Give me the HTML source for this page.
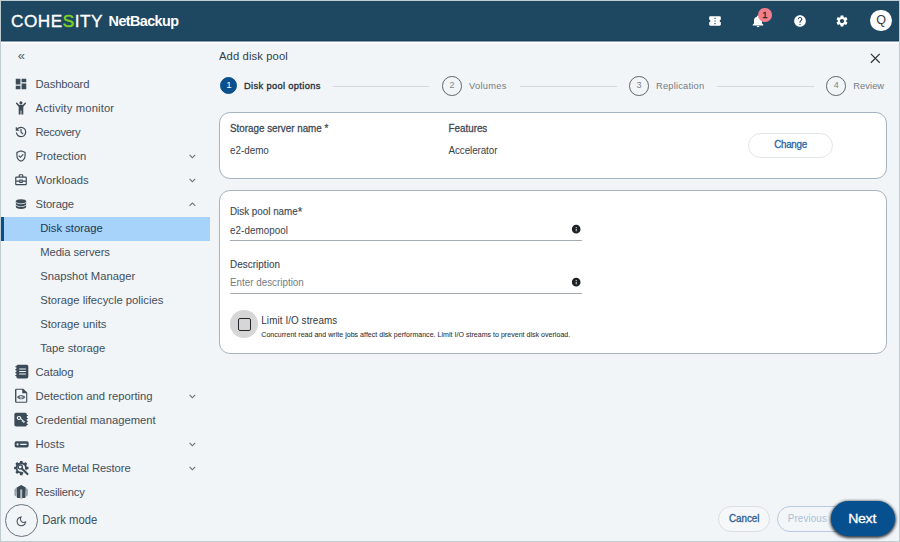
<!DOCTYPE html>
<html lang="en">
<head>
<meta charset="utf-8">
<title>Add disk pool - NetBackup</title>
<style>
*{box-sizing:border-box;margin:0;padding:0}
html,body{width:900px;height:542px;overflow:hidden}
body{background:#bfccd2;font-family:"Liberation Sans",sans-serif;color:#3e4b57;position:relative;font-size:11.25px}
#app{position:absolute;left:1px;top:1px;width:897.9px;height:539.6px;background:#f2f5f7;overflow:hidden}
.abs{position:absolute;white-space:nowrap}
/* header */
#hdr{position:absolute;left:0;top:0;width:898px;height:40px;background:#1e4861;border-bottom:1px solid #173e59}
#hdrline{position:absolute;left:0;top:40px;width:898px;height:3px;background:linear-gradient(#8fa4b1 0,#8fa4b1 1px,#fff 1px,#fff 2px,#f8fafb 2px,#f8fafb 3px)}
#logo{left:10px;top:7.6px;height:24px;line-height:24px;font-size:17.2px;color:#fff;letter-spacing:0.5px;-webkit-text-stroke:0.35px #fff}
#logo .g{color:#7ed321;-webkit-text-stroke:0.5px #7ed321}
#nb{left:107.6px;top:7.6px;height:24px;line-height:24px;font-size:14.4px;font-weight:bold;color:#fff;letter-spacing:-0.6px}
.hic{position:absolute;fill:#fff}
#badge{position:absolute;left:757.3px;top:7.3px;width:13.4px;height:13.4px;border-radius:50%;background:#f07f8b;color:#2a2a2a;font-size:9.5px;line-height:13.4px;text-align:center;-webkit-text-stroke:0.3px #2a2a2a}
#avatar{position:absolute;left:869.3px;top:9px;width:21.4px;height:21.4px;border-radius:50%;background:#fff;color:#3a3a3a;font-size:12.5px;line-height:21.4px;text-align:center}
/* sidebar */
.nav{position:absolute;left:0;width:209px;height:24px}
.nav svg.ic{position:absolute;left:13.3px;top:5px;width:14px;height:14px;fill:#3c4b58}
.nav .t{position:absolute;left:34.6px;top:0;height:24px;line-height:24px;font-size:11.25px;color:#424f5c;white-space:nowrap;transform:scaleY(1.03);transform-origin:0 66%}
.nav.sub .t{left:39.2px}
.nav svg.ch{position:absolute;left:184.5px;top:5.8px;width:12.8px;height:12.8px;fill:#63707b}
.nav.sel:after{content:"";position:absolute;left:0.2px;top:0.9px;width:208.6px;height:23.7px;background:#a7d3fb;z-index:0}
.nav.sel:before{content:"";position:absolute;left:0.2px;top:0.9px;width:2.4px;height:23.7px;background:#0b4f8a;z-index:1}
.nav.sel .t{z-index:2}
.nav.sel .t{color:#1d3850}
/* main */
.card{position:absolute;left:218px;width:667.6px;background:#fff;border:1.6px solid #a6b3c0;border-radius:11px}
.lbl{font-size:9.84px;color:#3b4754;height:14px;line-height:14px;transform:translateY(1.25px) scaleY(1.02);transform-origin:0 58%;-webkit-text-stroke:0.25px #3b4754}
.val{font-size:9.84px;color:#37424d;height:14px;line-height:14px;transform:translateY(1.25px) scaleY(1.02);transform-origin:0 58%}
.step{font-size:9.3px;color:#737b83;height:14px;line-height:14px;transform:translateY(0.45px)}
.circ{position:absolute;width:19.6px;height:19.6px;border-radius:50%;border:1.8px solid #5f656a;color:#7d8388;font-size:9px;line-height:16.2px;text-align:center}
.sline{position:absolute;top:85.2px;height:1px;background:#d3d9dd}
.uline{position:absolute;left:229px;width:352px;height:1.3px;background:#a4abb1}
.sy{display:inline-block;transform:translateY(-0.2px) scaleY(1.04);transform-origin:50% 58%}
.pill{position:absolute;border-radius:14px;text-align:center;font-size:9.84px}
</style>
</head>
<body>
<div id="app">
  <div id="hdr"></div>
  <div id="hdrline"></div>
  <div id="logo" class="abs">COHE<span class="g">S</span>ITY</div>
  <div id="nb" class="abs">NetBackup</div>

  <!-- header icons -->
  <svg class="hic" style="left:707px;top:12.7px;width:14px;height:14px" viewBox="0 0 24 24"><path d="M22 10V6c0-1.11-.9-2-2-2H4c-1.1 0-1.990.89-1.990 2v4c1.100 0 1.990.9 1.990 2s-.89 2-2 2v4c0 1.100.9 2 2 2h16c1.100 0 2-.9 2-2v-4c-1.100 0-2-.9-2-2s.9-2 2-2zm-9 7.500h-2v-2h2v2zm0-4.500h-2v-2h2v2zm0-4.500h-2v-2h2v2z"/></svg>
  <svg class="hic" style="left:748.6px;top:12.7px;width:16px;height:14.4px" preserveAspectRatio="none" viewBox="0 0 24 24"><path d="M12 22c1.100 0 2-.9 2-2h-4c0 1.100.89 2 2 2zm6-6v-5c0-3.070-1.640-5.640-4.500-6.320V4c0-.83-.67-1.500-1.500-1.500s-1.500.67-1.500 1.500v.68C7.630 5.360 6 7.920 6 11v5l-2 2v1h16v-1l-2-2z"/></svg>
  <div id="badge">1</div>
  <svg class="hic" style="left:792px;top:12.7px;width:14px;height:14px" viewBox="0 0 24 24"><path d="M12 2C6.480 2 2 6.480 2 12s4.480 10 10 10 10-4.480 10-10S17.520 2 12 2zm1 17h-2v-2h2v2zm2.070-7.750l-.9.920C13.450 12.900 13 13.500 13 15h-2v-.5c0-1.100.45-2.100 1.170-2.830l1.240-1.260c.37-.36.59-.86.590-1.410 0-1.100-.9-2-2-2s-2 .9-2 2H8c0-2.210 1.790-4 4-4s4 1.790 4 4c0 .88-.36 1.680-.93 2.250z"/></svg>
  <svg class="hic" style="left:834px;top:12.7px;width:14px;height:14px" viewBox="0 0 24 24"><path d="M19.140 12.940c.04-.3.060-.61.060-.94 0-.32-.02-.64-.07-.94l2.030-1.580c.18-.14.230-.41.120-.61l-1.920-3.320c-.12-.22-.37-.29-.59-.22l-2.390.96c-.5-.38-1.030-.7-1.620-.94l-.36-2.540c-.04-.24-.24-.41-.48-.41h-3.840c-.24 0-.43.170-.47.410l-.36 2.540c-.59.240-1.130.57-1.620.94l-2.390-.96c-.22-.08-.47 0-.59.220L2.740 8.870c-.12.210-.08.470.12.610l2.030 1.580c-.05.300-.09.630-.09.940s.02.640.07.940l-2.030 1.580c-.18.140-.23.410-.12.610l1.920 3.320c.12.220.37.290.59.220l2.390-.96c.5.380 1.030.7 1.620.94l.36 2.540c.05.240.24.410.48.410h3.840c.24 0 .44-.17.470-.41l.36-2.540c.59-.24 1.130-.56 1.620-.94l2.390.96c.22.080.47 0 .59-.22l1.920-3.320c.12-.22.070-.47-.12-.61l-2.010-1.580zM12 15.600c-1.980 0-3.600-1.620-3.600-3.600s1.620-3.600 3.600-3.600 3.600 1.620 3.600 3.600-1.620 3.600-3.600 3.600z"/></svg>
  <div id="avatar">Q</div>

  <!-- sidebar -->
  <div class="abs" style="left:16.8px;top:47.1px;height:16px;line-height:16px;font-size:13px;color:#4d5b68">«</div>

  <div class="nav" style="top:71px"><svg class="ic" viewBox="0 -960 960 960"><path d="M520-600v-240h320v240H520ZM120-440v-400h320v400H120Zm400 320v-400h320v400H520Zm-400 0v-240h320v240H120Z"/></svg><span class="t" style="letter-spacing:-0.15px">Dashboard</span></div>
  <div class="nav" style="top:95px"><svg class="ic" style="left:15.100px;top:5.400px;width:10px;height:13.400px" viewBox="0 0 10 13.400"><circle cx="4.950" cy="1.800" r="1.550"/><path d="M0.600 2.200L3.300 5.200M9.400 2.200L6.700 5.200" stroke="#3c4b58" stroke-width="1.500" stroke-linecap="round" fill="none"/><path d="M2.700 4.800a1 1 0 0 1 1-1h2.600a1 1 0 0 1 1 1v8.600H5.400V9.600h-.8v3.800H2.700z"/></svg><span class="t" style="letter-spacing:0.15px">Activity monitor</span></div>
  <div class="nav" style="top:119px"><svg class="ic" viewBox="0 -960 960 960"><path d="M480-120q-138 0-240.500-91.500T122-440h82q14 104 92.500 172T480-200q117 0 198.500-81.500T760-480q0-117-81.500-198.500T480-760q-69 0-129 32t-101 88h110v80H120v-240h80v94q51-64 124.500-99T480-840q75 0 140.500 28.500t114 77q48.500 48.500 77 114T840-480q0 75-28.500 140.500t-77 114q-48.500 48.500-114 77T480-120Zm112-192L440-464v-216h80v184l128 128-56 56Z"/></svg><span class="t" style="letter-spacing:-0.36px">Recovery</span></div>
  <div class="nav" style="top:143px"><svg class="ic" viewBox="0 -960 960 960"><path d="M438-338l226-226-56-58-170 170-86-84-56 56 142 142Zm42 258q-139-35-229.500-159.500T160-516v-244l320-120 320 120v244q0 152-90.500 276.500T480-80Zm0-84q104-33 172-132t68-220v-189l-240-90-240 90v189q0 121 68 220t172 132Zm0-316Z"/></svg><span class="t">Protection</span><svg class="ch" viewBox="0 0 24 24"><path d="M16.590 8.590L12 13.170 7.410 8.590 6 10l6 6 6-6z"/></svg></div>
  <div class="nav" style="top:167px"><svg class="ic" viewBox="0 -960 960 960"><path d="M160-120q-33 0-56.500-23.500T80-200v-440q0-33 23.500-56.500T160-720h160v-80q0-33 23.500-56.500T400-880h160q33 0 56.500 23.500T640-800v80h160q33 0 56.500 23.500T880-640v440q0 33-23.500 56.500T800-120H160Zm240-600h160v-80H400v80Zm400 360H600v80H360v-80H160v160h640v-160Zm-360 0h80v-80h-80v80Zm-280-80h200v-80h240v80h200v-200H160v200Zm320 40Z"/></svg><span class="t">Workloads</span><svg class="ch" viewBox="0 0 24 24"><path d="M16.590 8.590L12 13.170 7.410 8.590 6 10l6 6 6-6z"/></svg></div>
  <div class="nav" style="top:191px"><svg class="ic" viewBox="0 0 24 24"><ellipse cx="12" cy="7.400" rx="8.800" ry="3.700"/><path d="M3.200 8.600A8.800 3.700 0 0 0 20.800 8.600V12A8.800 3.700 0 0 1 3.200 12Z"/><path d="M3.200 13.200A8.800 3.700 0 0 0 20.800 13.200V16.800A8.800 3.700 0 0 1 3.200 16.800Z"/></svg><span class="t" style="letter-spacing:-0.15px">Storage</span><svg class="ch" viewBox="0 0 24 24"><path d="M12 8l-6 6 1.410 1.410L12 10.830l4.590 4.580L18 14z"/></svg></div>
  <div class="nav sub sel" style="top:215px"><span class="t">Disk storage</span></div>
  <div class="nav sub" style="top:239px"><span class="t" style="letter-spacing:-0.07px">Media servers</span></div>
  <div class="nav sub" style="top:263px"><span class="t">Snapshot Manager</span></div>
  <div class="nav sub" style="top:287px"><span class="t">Storage lifecycle policies</span></div>
  <div class="nav sub" style="top:311px"><span class="t">Storage units</span></div>
  <div class="nav sub" style="top:335px"><span class="t">Tape storage</span></div>
  <div class="nav" style="top:359px"><svg class="ic" style="left:12.600px;top:4.400px;width:16px;height:15.050px" preserveAspectRatio="none" viewBox="0 0 24 24"><path d="M6 1h13a2.500 2.500 0 0 1 2.500 2.500v17A2.500 2.500 0 0 1 19 23H6a2.500 2.500 0 0 1-2.500-2.500V19.300H2v-1.800h1.500v-2.900H2v-1.800h1.500V9.900H2V8.100h1.500V5.200H2V3.400h1.500A2.500 2.500 0 0 1 6 1zm1.800 6.200v1.500h10V7.200zm0 4v1.500h10v-1.500zm0 4v1.500h10v-1.500z" fill-rule="evenodd"/></svg><span class="t" style="letter-spacing:-0.15px">Catalog</span></div>
  <div class="nav" style="top:383px"><svg class="ic" style="left:12.200px;top:4.400px;width:16.300px;height:15.300px" preserveAspectRatio="none" viewBox="0 0 24 24"><path d="M5 1h10l6 6v14a2 2 0 0 1-2 2H5a2 2 0 0 1-2-2V3a2 2 0 0 1 2-2zm0 1.600V21.400h14.400V8.400h-5.800V2.600z" fill-rule="evenodd"/><path d="M12 11c3 0 5.200 1.600 6.200 3.400-1 1.800-3.200 3.400-6.200 3.400s-5.200-1.600-6.200-3.400c1-1.800 3.200-3.400 6.200-3.400zm0 1.400a2 2 0 1 0 0 4 2 2 0 0 0 0-4z" fill-rule="evenodd" opacity=".8"/><circle cx="12" cy="14.400" r="1" opacity=".8"/></svg><span class="t">Detection and reporting</span><svg class="ch" viewBox="0 0 24 24"><path d="M16.590 8.590L12 13.170 7.410 8.590 6 10l6 6 6-6z"/></svg></div>
  <div class="nav" style="top:407px"><svg class="ic" style="left:12.050px;top:4.400px;width:16.200px;height:15.050px" preserveAspectRatio="none" viewBox="0 0 24 24"><path d="M4.500 1H18a2.500 2.500 0 0 1 2.500 2.500V4.700H22v1.800h-1.500v2.900H22v1.800h-1.500v2.900H22v1.800h-1.500v2.900H22v1.800h-1.500A2.500 2.500 0 0 1 18 23H4.500A2.500 2.500 0 0 1 2 20.500v-17A2.500 2.500 0 0 1 4.500 1zm4.300 5.200a3.300 3.300 0 1 0 2.500 5.500l2.400 2.100-.9 1 1.100 1 .9-1 .9.800-.9 1 1.100 1 2-2.200-5.700-5.100A3.300 3.300 0 0 0 8.800 6.200zm0 1.700a1.600 1.600 0 1 1 0 3.200 1.600 1.600 0 0 1 0-3.200z" fill-rule="evenodd"/></svg><span class="t">Credential management</span></div>
  <div class="nav" style="top:431px"><svg class="ic" style="left:12.500px;top:3.750px;width:15.300px;height:16.800px" preserveAspectRatio="none" viewBox="0 0 24 24"><path d="M3.500 7.500h17A2.500 2.500 0 0 1 23 10v4a2.500 2.500 0 0 1-2.500 2.500h-17A2.500 2.500 0 0 1 1 14v-4a2.500 2.500 0 0 1 2.500-2.500zM5.600 10.400a1.600 1.600 0 1 0 0 3.200 1.600 1.600 0 0 0 0-3.200zm4.200 .6v2h10v-2z" fill-rule="evenodd"/></svg><span class="t" style="letter-spacing:0.07px">Hosts</span><svg class="ch" viewBox="0 0 24 24"><path d="M16.590 8.590L12 13.170 7.410 8.590 6 10l6 6 6-6z"/></svg></div>
  <div class="nav" style="top:455px"><svg class="ic" style="left:13px;top:5px;width:15px;height:15px" viewBox="0 0 15 15"><g transform="translate(7.300 7.000)"><rect x="-1.350" y="-7.150" width="2.700" height="2.600" rx=".5" transform="rotate(0)"/><rect x="-1.350" y="-7.150" width="2.700" height="2.600" rx=".5" transform="rotate(45)"/><rect x="-1.350" y="-7.150" width="2.700" height="2.600" rx=".5" transform="rotate(90)"/><rect x="-1.350" y="-7.150" width="2.700" height="2.600" rx=".5" transform="rotate(135)"/><rect x="-1.350" y="-7.150" width="2.700" height="2.600" rx=".5" transform="rotate(180)"/><rect x="-1.350" y="-7.150" width="2.700" height="2.600" rx=".5" transform="rotate(225)"/><rect x="-1.350" y="-7.150" width="2.700" height="2.600" rx=".5" transform="rotate(270)"/><rect x="-1.350" y="-7.150" width="2.700" height="2.600" rx=".5" transform="rotate(315)"/><path d="M0-5.700a5.700 5.700 0 1 0 0 11.400a5.700 5.700 0 1 0 0-11.400zm0 1.900a3.800 3.800 0 1 1 0 7.600a3.800 3.800 0 1 1 0-7.600z" fill-rule="evenodd"/></g><path d="M7.600 7.400L13.500 13.100" stroke="#f2f5f7" stroke-width="3.600" stroke-linecap="butt" fill="none"/><circle cx="6.300" cy="6.100" r="2.100" fill="#f2f5f7" stroke="#3c4b58" stroke-width="1.300"/><path d="M7.800 7.600L13.500 13.100" stroke="#3c4b58" stroke-width="2.100" stroke-linecap="round" fill="none"/></svg><span class="t" style="letter-spacing:-0.11px">Bare Metal Restore</span><svg class="ch" viewBox="0 0 24 24"><path d="M16.590 8.590L12 13.170 7.410 8.590 6 10l6 6 6-6z"/></svg></div>
  <div class="nav" style="top:479px"><svg class="ic" style="left:13px;top:4.800px;width:14.400px;height:13.800px" viewBox="0 0 14.400 13.800"><path d="M2.900 2.500L0.300 4.600V10L3.100 12.600zM11.500 2.500L14.100 4.600V10L11.300 12.600z" fill="#aeb6bd"/><path d="M1.500 3.700v7.400M12.900 3.700v7.400" stroke="#7d8891" stroke-width=".5" fill="none"/><path d="M7.200 0L11.700 2.600L11.300 12.900H3.100L2.700 2.600z"/><rect x="6.200" y="4.400" width="2" height="9.400" fill="#b4bcc3"/></svg><span class="t" style="letter-spacing:-0.23px">Resiliency</span></div>

  <div style="position:absolute;left:3.500px;top:502.800px;width:33px;height:33px;border-radius:50%;border:1.2px solid #67727c"></div>
  <svg style="position:absolute;left:14.000px;top:513.600px;width:12.800px;height:12.800px;fill:#4a5763" viewBox="0 0 24 24"><path d="M9.370 5.510C9.190 6.150 9.100 6.820 9.100 7.500c0 4.080 3.320 7.400 7.400 7.400.68 0 1.350-.09 1.990-.27C17.450 17.190 14.930 19 12 19c-3.860 0-7-3.140-7-7 0-2.930 1.810-5.450 4.370-6.490zM12 3c-4.970 0-9 4.030-9 9s4.030 9 9 9 9-4.030 9-9c0-.46-.04-.92-.1-1.360-.98 1.370-2.580 2.260-4.400 2.260-2.980 0-5.400-2.420-5.400-5.400 0-1.810.89-3.420 2.260-4.400-.44-.06-.9-.1-1.360-.1z"/></svg>
  <div class="abs" style="left:41.2px;top:506.5px;height:24px;line-height:24px;font-size:11.25px;color:#424f5c;transform:translateY(0.3px) scaleY(1.07);transform-origin:0 58%">Dark mode</div>

  <!-- main -->
  <div class="abs" style="left:218px;top:46px;height:18px;line-height:18px;font-size:11.25px;color:#323e49;letter-spacing:0.1px;transform:translateY(0px) scaleY(1.05);transform-origin:0 58%">Add disk pool</div>
  <svg style="position:absolute;left:869.400px;top:52.400px;width:10.600px;height:10.600px" viewBox="0 0 12 12"><path d="M1 1l10 10M11 1L1 11" stroke="#2d343a" stroke-width="1.400" fill="none"/></svg>

  <!-- stepper -->
  <div class="circ" style="left:219.300px;top:76.000px;width:17px;height:17px;line-height:14.400px;font-size:9.6px;background:#0b4f8d;border-color:#0b4f8d;color:#fff">1</div>
  <div class="abs step" style="left:243px;top:78.300px;color:#27313a;-webkit-text-stroke:0.33px #27313a;letter-spacing:0.35px">Disk pool options</div>
  <div class="sline" style="left:332px;width:96px"></div>
  <div class="circ" style="left:441.200px;top:75.000px">2</div>
  <div class="abs step" style="left:468px;top:78.300px;letter-spacing:0.280px">Volumes</div>
  <div class="sline" style="left:519px;width:97px"></div>
  <div class="circ" style="left:628.200px;top:75.000px">3</div>
  <div class="abs step" style="left:655px;top:78.300px;letter-spacing:0.210px">Replication</div>
  <div class="sline" style="left:716px;width:97px"></div>
  <div class="circ" style="left:825.400px;top:75.000px">4</div>
  <div class="abs step" style="left:852.300px;top:78.300px;letter-spacing:0.060px">Review</div>

  <!-- card 1 -->
  <div class="card" style="top:110.700px;height:67.500px"></div>
  <div class="abs lbl" style="left:229px;top:120px">Storage server name *</div>
  <div class="abs val" style="left:229px;top:142px">e2-demo</div>
  <div class="abs lbl" style="left:447.500px;top:120px">Features</div>
  <div class="abs val" style="left:447.500px;top:142px;letter-spacing:-0.080px">Accelerator</div>
  <div class="pill" style="left:747.300px;top:132px;width:84.500px;height:25.200px;line-height:21.400px;border:1px solid #e1e6ea;background:#fff;color:#2b68a5;-webkit-text-stroke:0.3px #2b68a5;letter-spacing:-0.300px"><span class="sy">Change</span></div>

  <!-- card 2 -->
  <div class="card" style="top:188.800px;height:164.100px"></div>
  <div class="abs lbl" style="left:229px;top:203px;-webkit-text-stroke-width:0.12px">Disk pool name<span style="font-size:12px;line-height:10px;position:relative;top:1.2px">*</span></div>
  <div class="abs val" style="left:229px;top:221.700px;letter-spacing:0.060px">e2-demopool</div>
  <div class="uline" style="top:238.900px"></div>
  <svg style="position:absolute;left:570.400px;top:223.100px;width:10.400px;height:10.400px;fill:#1f2225" viewBox="0 0 24 24"><path d="M12 2C6.480 2 2 6.480 2 12s4.480 10 10 10 10-4.480 10-10S17.520 2 12 2zm1 15h-2v-6h2v6zm0-8h-2V7h2v2z"/></svg>
  <div class="abs lbl" style="left:229px;top:256px;letter-spacing:0.080px;-webkit-text-stroke-width:0.12px">Description</div>
  <div class="abs val" style="left:229px;top:274.200px;color:#717c85">Enter description</div>
  <div class="uline" style="top:292.100px"></div>
  <svg style="position:absolute;left:570.400px;top:275.500px;width:10.400px;height:10.400px;fill:#1f2225" viewBox="0 0 24 24"><path d="M12 2C6.480 2 2 6.480 2 12s4.480 10 10 10 10-4.480 10-10S17.520 2 12 2zm1 15h-2v-6h2v6zm0-8h-2V7h2v2z"/></svg>

  <div style="position:absolute;left:229px;top:309.200px;width:28.200px;height:28.200px;border-radius:50%;background:#d6d6d6"></div>
  <div style="position:absolute;left:236.500px;top:316.600px;width:13.400px;height:13.400px;border:1.800px solid #23272b;border-radius:2px"></div>
  <div class="abs val" style="left:260.300px;top:312.200px;color:#2f3943;letter-spacing:0.100px">Limit I/O streams</div>
  <div class="abs" style="left:260.300px;top:329px;height:10px;line-height:10px;font-size:7.030px;color:#2b3138;-webkit-text-stroke:0.06px #2b3138;letter-spacing:0.03px;transform:translateY(0.3px) scaleY(1.05);transform-origin:0 58%">Concurrent read and write jobs affect disk performance. Limit I/O streams to prevent disk overload.</div>

  <!-- footer buttons -->
  <div class="pill" style="left:717.200px;top:505.000px;width:52px;height:26px;line-height:23.800px;border:1px solid #d9dfe4;background:#f5f7f8;color:#2c6196;-webkit-text-stroke:0.3px #2c6196"><span class="sy">Cancel</span></div>
  <div class="pill" style="left:776px;top:505.000px;width:72px;height:26px;line-height:23.800px;border:1px solid #b7cbe2;background:#f3f6f8;color:#a9bfd9;text-align:left;padding-left:9.800px;letter-spacing:0.120px"><span class="sy">Previous</span></div>
  <div class="pill" style="left:830px;top:500px;width:64px;height:35.200px;line-height:35.200px;border-radius:18px;background:#07508f;color:#fff;font-size:14.060px;letter-spacing:-0.250px;padding-right:1.800px;box-shadow:0 1px 3px 1px rgba(15,25,35,.85)"><span class="sy" style="transform:translateY(-0.1px) scaleY(0.97);-webkit-text-stroke:0.3px #fff">Next</span></div>
</div>
</body>
</html>
